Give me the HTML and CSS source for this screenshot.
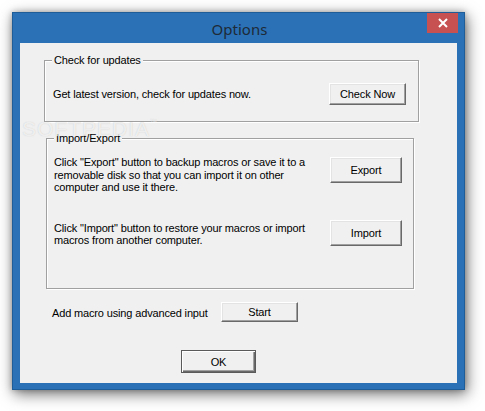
FILE: index.html
```html
<!DOCTYPE html>
<html>
<head>
<meta charset="utf-8">
<link rel="stylesheet" href="styles.css">
</head>
<body>
<div class="window">
  <div class="titlebar">
    <span class="title">Options</span>
    <div class="close"><svg width="10" height="10" viewBox="0 0 10 10"><path d="M1 1 L9 9 M9 1 L1 9" stroke="#fff" stroke-width="2"/></svg></div>
  </div>
  <div class="client">
    <div class="group g1">
      <span class="legend">Check for updates</span>
      <div class="row r1">
        <span class="text">Get latest version, check for updates now.</span>
        <div class="btn b-check">Check Now</div>
      </div>
    </div>
    <div class="group g2">
      <span class="legend">Import/Export</span>
      <div class="row r2">
        <p class="para">Click "Export" button to backup macros or save it to a removable disk so that you can import it on other computer and use it there.</p>
        <div class="btn b-export">Export</div>
      </div>
      <div class="row r3">
        <p class="para">Click "Import" button to restore your macros or import macros from another computer.</p>
        <div class="btn b-import">Import</div>
      </div>
    </div>
    <div class="row r4">
      <span class="text">Add macro using advanced input</span>
      <div class="btn b-start">Start</div>
    </div>
    <div class="okrow">
      <div class="btn b-ok">OK</div>
    </div>
    <div class="watermark">SOFTPEDIA<sup>™</sup></div>
  </div>
</div>
</body>
</html>
```

FILE: styles.css
```css
html, body {
  margin: 0;
  padding: 0;
  background: #ffffff;
}
body {
  width: 485px;
  height: 411px;
  overflow: hidden;
  padding-top: 12px;
  box-sizing: border-box;
}
.window {
  margin-left: 12px;
  width: 453px;
  height: 378px;
  background: #2a71b6;
  box-sizing: border-box;
  border: 1px solid #1f5d99;
  box-shadow: 2px 4px 14px rgba(0,0,0,0.55), 0 0 6px rgba(0,0,0,0.25);
  position: relative;
  display: flex;
  flex-direction: column;
}
.titlebar {
  height: 30px;
  display: flex;
  align-items: center;
  justify-content: center;
  position: relative;
}
.title {
  font-family: "Noto Sans", "Open Sans", sans-serif;
  font-size: 15px;
  color: #1e2a36;
  margin-left: 2px;
  margin-top: 1px;
}
.close {
  position: absolute;
  right: 6px;
  top: 0;
  width: 31px;
  height: 20px;
  background: #c75050;
  display: flex;
  align-items: center;
  justify-content: center;
}
.close svg { display: block; }
.client {
  margin: 0 7px 6px 7px;
  flex: 1;
  background: #f0f0f0;
  position: relative;
  font-family: "Liberation Sans", Arial, sans-serif;
  font-size: 11px;
  letter-spacing: -0.15px;
  color: #000;
  padding-top: 17px;
  box-sizing: border-box;
}
.group {
  position: relative;
  border: 1px solid #a0a0a0;
  box-shadow: 1px 1px 0 #ffffff, inset 1px 1px 0 #ffffff;
  box-sizing: border-box;
}
.legend {
  position: absolute;
  top: -8px;
  left: 7px;
  padding: 0 2px;
  background: #f0f0f0;
  line-height: 14px;
}
.g1 {
  margin-left: 24px;
  width: 375px;
  height: 62px;
}
.g2 {
  margin-left: 26px;
  margin-top: 16px;
  width: 368px;
  height: 151px;
}
.row {
  display: flex;
  align-items: flex-start;
}
.text { line-height: 13px; }
.r1 {
  padding: 22px 12px 0 8px;
  justify-content: space-between;
}
.r1 .text { margin-top: 5px; }
.para {
  margin: 0;
  width: 262px;
  line-height: 12.5px;
}
.r2 {
  padding: 17px 0 0 7px;
}
.r2 .btn { margin-left: 14px; margin-top: 1px; }
.r3 {
  padding: 0 0 0 7px;
  margin-top: 26px;
}
.r3 .para { margin-top: 2px; }
.r3 .btn { margin-left: 14px; }
.r4 {
  margin-top: 13px;
  padding-left: 32px;
}
.r4 .text { margin-top: 5px; width: 169px; }
.btn {
  box-sizing: border-box;
  background: #f0f0f0;
  border-top: 1px solid #ffffff;
  border-left: 1px solid #ffffff;
  border-right: 1px solid #696969;
  border-bottom: 1px solid #696969;
  box-shadow: inset -1px -1px 0 #a0a0a0, inset 1px 1px 0 #e3e3e3;
  display: flex;
  align-items: center;
  justify-content: center;
  flex: none;
}
.b-check { width: 77px; height: 22px; }
.b-export { width: 72px; height: 26px; }
.b-import { width: 72px; height: 26px; }
.b-start { width: 77px; height: 20px; }
.okrow {
  margin-top: 28px;
  padding-left: 161px;
}
.b-ok {
  width: 75px;
  height: 23px;
  border: 1px solid #5a5a5a;
  box-shadow: inset 1px 1px 0 #ffffff, inset -1px -1px 0 #696969, inset -2px -2px 0 #a0a0a0;
}
.watermark {
  position: absolute;
  left: 2px;
  top: 74px;
  font-family: "Liberation Sans", Arial, sans-serif;
  font-size: 21px;
  letter-spacing: 1px;
  color: rgba(255,255,255,0.7);
  text-shadow: 0 0 1px rgba(120,120,120,0.35);
  pointer-events: none;
}
.watermark sup {
  font-size: 7px;
  vertical-align: 12px;
}
```
